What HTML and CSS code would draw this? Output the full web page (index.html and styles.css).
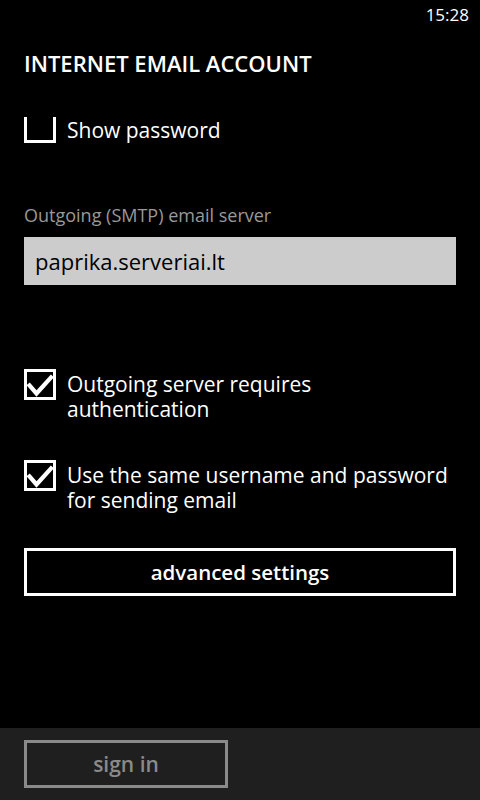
FILE: index.html
```html
<!DOCTYPE html>
<html>
<head>
<meta charset="utf-8">
<link rel="stylesheet" href="styles.css">
</head>
<body>
<div class="screen">
  <div class="status"><span class="time">15:28</span></div>
  <main class="main">
    <h1 class="title">INTERNET EMAIL ACCOUNT</h1>
    <div class="check-row first">
      <span class="box open"></span>
      <span class="check-label">Show password</span>
    </div>
    <div class="field-label">Outgoing (SMTP) email server</div>
    <div class="textbox">paprika.serveriai.lt</div>
    <div class="check-row auth">
      <span class="box"><svg viewBox="0 0 32 31" width="32" height="31"><path d="M5.5 16.5 L12.5 24.5 L27 8.5" fill="none" stroke="#fff" stroke-width="4.2" stroke-linecap="square"/></svg></span>
      <span class="check-label">Outgoing server requires authentication</span>
    </div>
    <div class="check-row same">
      <span class="box"><svg viewBox="0 0 32 31" width="32" height="31"><path d="M5.5 16.5 L12.5 24.5 L27 8.5" fill="none" stroke="#fff" stroke-width="4.2" stroke-linecap="square"/></svg></span>
      <span class="check-label">Use the same username and password for sending email</span>
    </div>
    <div class="adv-button">advanced settings</div>
  </main>
  <footer class="appbar">
    <div class="signin">sign in</div>
  </footer>
</div>
</body>
</html>
```
FILE: styles.css
```css
html, body {
  margin: 0;
  padding: 0;
  background: #000;
}
.screen {
  width: 480px;
  height: 800px;
  display: flex;
  flex-direction: column;
  background: #000;
  color: #fff;
  font-family: "Open Sans", "Noto Sans", sans-serif;
  overflow: hidden;
}
.status {
  height: 32px;
  display: flex;
  justify-content: flex-end;
  align-items: flex-start;
  padding-right: 11px;
}
.time {
  font-size: 17px;
  line-height: 17px;
  margin-top: 6px;
}
.main {
  flex: 1;
  padding: 0 24px;
  display: flex;
  flex-direction: column;
}
.title {
  margin: 16px 0 0 0;
  font-size: 22px;
  line-height: 30px;
  font-weight: 600;
  letter-spacing: 0;
}
.check-row {
  display: flex;
  align-items: flex-start;
  gap: 11px;
}
.check-row.first {
  margin-top: 37px;
  align-items: flex-end;
}
.box {
  width: 32px;
  height: 31px;
  box-sizing: border-box;
  border: 3px solid #fff;
  flex: none;
  position: relative;
}
.box svg {
  position: absolute;
  left: -3px;
  top: -3px;
}
.box.open {
  border-top: none;
  height: 26px;
}
.check-label {
  font-size: 21px;
  line-height: 25px;
  margin-top: 3px;
}
.first .check-label {
  line-height: 30px;
  margin-bottom: -2px;
  margin-top: 0;
}
.field-label {
  margin-top: 60px;
  color: #999;
  font-size: 18px;
  line-height: 24px;
}
.textbox {
  margin-top: 10px;
  height: 48px;
  background: #ccc;
  color: #000;
  font-size: 22px;
  line-height: 48px;
  padding-left: 11px;
}
.check-row.auth {
  margin-top: 84px;
}
.check-row.same {
  margin-top: 38px;
}
.adv-button {
  margin-top: 35px;
  height: 48px;
  box-sizing: border-box;
  border: 3px solid #fff;
  display: flex;
  align-items: center;
  justify-content: center;
  font-size: 20.5px;
  font-weight: 600;
}
.appbar {
  height: 72px;
  background: #1f1f1f;
  padding: 12px 24px 0 24px;
  box-sizing: border-box;
}
.signin {
  width: 204px;
  height: 48px;
  box-sizing: border-box;
  border: 3px solid #8a8a8a;
  color: #8a8a8a;
  display: flex;
  align-items: center;
  justify-content: center;
  font-size: 21px;
  font-weight: 600;
}
```
